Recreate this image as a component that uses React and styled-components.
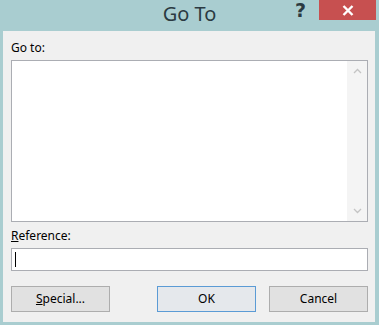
import React from "react";
import styled, { createGlobalStyle } from "styled-components";

const GlobalStyle = createGlobalStyle`
  body {
    margin: 0;
    font-family: "Noto Sans", "Liberation Sans", sans-serif;
  }
`;

const Window = styled.div`
  width: 379px;
  height: 325px;
  background: #a9cdd0;
  display: flex;
  flex-direction: column;
  box-sizing: border-box;
`;

const TitleBar = styled.div`
  height: 31px;
  flex-shrink: 0;
  display: grid;
  grid-template-columns: 1fr auto 1fr;
  align-items: start;
`;

const Title = styled.div`
  grid-column: 2;
  font-size: 20px;
  line-height: 27px;
  color: #2b3a42;
`;

const Controls = styled.div`
  grid-column: 3;
  justify-self: end;
  display: flex;
  align-items: flex-start;
  padding-right: 3px;
`;

const Help = styled.div`
  font-family: "DejaVu Sans", sans-serif;
  font-weight: bold;
  font-size: 19px;
  line-height: 20px;
  color: #2b3a42;
  margin-right: 13px;
`;

const Close = styled.div`
  width: 57px;
  height: 20px;
  background: #c75050;
  display: flex;
  align-items: center;
  justify-content: center;
`;

const Client = styled.div`
  flex: 1;
  margin: 0 4px 3px 3px;
  background: #f0f0f0;
  padding: 0 7px 0 8px;
  display: flex;
  flex-direction: column;
  font-size: 12px;
  color: #000;
`;

const Label = styled.div`
  line-height: 16px;
  margin-top: ${(p) => p.$top}px;
  margin-bottom: 4px;
`;

const ListBox = styled.div`
  height: 162px;
  box-sizing: border-box;
  border: 1px solid #abadb3;
  background: #fff;
  display: flex;
  justify-content: flex-end;
`;

const ScrollBar = styled.div`
  width: 20px;
  background: #f4f4f4;
  display: flex;
  flex-direction: column;
  justify-content: space-between;
  align-items: center;
  padding: 7px 0;
`;

const TextInput = styled.div`
  height: 23px;
  box-sizing: border-box;
  border: 1px solid #abadb3;
  background: #fff;
  display: flex;
  align-items: center;
`;

const Caret = styled.span`
  width: 1px;
  height: 15px;
  background: #000;
  margin-left: 3px;
`;

const ButtonRow = styled.div`
  margin-top: 15px;
  display: flex;
  justify-content: space-between;
`;

const ButtonGroup = styled.div`
  display: flex;
  gap: 13px;
`;

const Button = styled.div`
  width: 99px;
  height: 26px;
  box-sizing: border-box;
  border: 1px solid ${(p) => (p.$primary ? "#5b9bd5" : "#adadad")};
  background: ${(p) => (p.$primary ? "#e5e8ec" : "#e1e1e1")};
  display: flex;
  align-items: center;
  justify-content: center;
  padding-bottom: 1px;
`;

const Chevron = ({ down }) => (
  <svg width="9" height="6" viewBox="0 0 9 6">
    <path
      d={down ? "M1 1 L4.5 4.5 L8 1" : "M1 5 L4.5 1.5 L8 5"}
      fill="none"
      stroke="#c4c4c4"
      strokeWidth="1.3"
    />
  </svg>
);

const App = () => {
  return (
    <Window>
      <GlobalStyle />
      <TitleBar>
        <Title>Go To</Title>
        <Controls>
          <Help>?</Help>
          <Close>
            <svg width="12" height="11" viewBox="0 0 12 11">
              <path
                d="M1.5 1 L10.5 10 M10.5 1 L1.5 10"
                stroke="#fff"
                strokeWidth="2.4"
              />
            </svg>
          </Close>
        </Controls>
      </TitleBar>
      <Client>
        <Label $top={9}>Go to:</Label>
        <ListBox>
          <ScrollBar>
            <Chevron />
            <Chevron down />
          </ScrollBar>
        </ListBox>
        <Label $top={6}>
          <u>R</u>eference:
        </Label>
        <TextInput>
          <Caret />
        </TextInput>
        <ButtonRow>
          <Button>
            <span>
              <u>S</u>pecial...
            </span>
          </Button>
          <ButtonGroup>
            <Button $primary>OK</Button>
            <Button>Cancel</Button>
          </ButtonGroup>
        </ButtonRow>
      </Client>
    </Window>
  );
};

export default App;
